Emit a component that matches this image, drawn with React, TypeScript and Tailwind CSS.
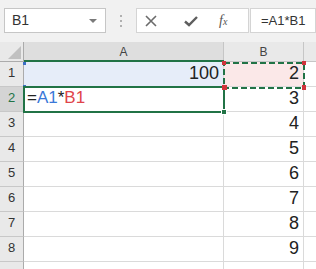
import React from "react";

const rows = [1, 2, 3, 4, 5, 6, 7, 8, 9];
const bValues: Record<number, string> = { 1: "2", 2: "3", 3: "4", 4: "5", 5: "6", 6: "7", 7: "8", 8: "9" };

export default function App() {
  return (
    <div className="w-[316px] h-[269px] overflow-hidden bg-white" style={{ fontFamily: '"Liberation Sans", Arial, sans-serif' }}>
      {/* formula bar */}
      <div className="h-[42px] bg-[#f1f1f1] flex items-start pt-[8px]">
        <div className="ml-[4px] w-[102px] h-[25px] bg-white border border-[#c6c6c6] flex items-center justify-between pl-[7px] pr-[8px]">
          <span className="text-[14px] text-[#333]">B1</span>
          <span className="w-0 h-0 border-l-[4px] border-r-[4px] border-t-[4px] border-l-transparent border-r-transparent border-t-[#7a7a7a]" />
        </div>
        <div className="w-[30px] h-[25px] flex flex-col items-center justify-center gap-[3px]">
          <span className="w-[2px] h-[2px] bg-[#b0b0b0]" />
          <span className="w-[2px] h-[2px] bg-[#b0b0b0]" />
          <span className="w-[2px] h-[2px] bg-[#b0b0b0]" />
        </div>
        <div className="w-[113px] h-[25px] bg-white border border-[#d4d4d4] flex items-center">
          <svg width="14" height="14" viewBox="0 0 14 14" className="ml-[7px]">
            <path d="M2 2 L12 12 M12 2 L2 12" stroke="#6b6b6b" strokeWidth="1.6" />
          </svg>
          <svg width="16" height="14" viewBox="0 0 16 14" className="ml-[25px]">
            <path d="M2 7.5 L6 11 L14 3" stroke="#5e5e5e" strokeWidth="2.4" fill="none" />
          </svg>
          <span className="ml-[20px] text-[14px] italic text-[#555]" style={{ fontFamily: '"Liberation Serif", serif' }}>
            f<span className="text-[10px]">x</span>
          </span>
        </div>
        <div className="ml-[1px] flex-1 h-[25px] bg-white border border-[#d4d4d4] flex items-center pl-[10px]">
          <span className="text-[13px] text-[#333]">=A1*B1</span>
        </div>
      </div>

      {/* sheet */}
      <div className="relative grid grid-cols-[24px_200px_80px_1fr] grid-rows-[20px_repeat(9,25px)]">
        {/* header row */}
        <div className="bg-[#e9e9e9] border-r border-b border-[#ababab] relative">
          <svg width="24" height="20" viewBox="0 0 24 20" className="absolute left-0 top-0">
            <path d="M8 17 L21 17 L21 4 Z" fill="#c0c0c0" />
          </svg>
        </div>
        <div className="bg-[#dedede] border-r border-[#c6c6c6] flex items-center justify-center text-[12px] text-[#444] pb-[1px]">A</div>
        <div className="bg-[#e9e9e9] border-r border-b border-[#c6c6c6] flex items-center justify-center text-[12px] text-[#444]">B</div>
        <div className="bg-[#e9e9e9] border-b border-[#c6c6c6]" />

        {rows.map((r) => (
          <React.Fragment key={r}>
            <div
              className={`border-r border-b border-[#ababab] border-b-[#c8c8c8] flex items-end justify-center pb-[4px] text-[13px] ${
                r === 2 ? "bg-[#d4d4d4] text-[#217346]" : "bg-[#e9e9e9] text-[#333]"
              }`}
            >
              {r < 9 ? r : ""}
            </div>
            <div
              className={`border-r border-b border-[#dadada] flex items-end justify-end pr-[4px] pb-[2px] ${
                r === 1 ? "bg-[#e6edf9]" : ""
              }`}
            >
              {r === 1 && <span className="text-[18px] leading-[22px] text-[#222]">100</span>}
              {r === 2 && (
                <span className="mr-auto pl-[3px] text-[17px] leading-[22px] text-[#222]">
                  =<span className="text-[#3b78d8]">A1</span>*<span className="text-[#e0444a]">B1</span>
                </span>
              )}
            </div>
            <div
              className={`border-r border-b border-[#dadada] flex items-end justify-end pr-[4px] pb-[2px] ${
                r === 1 ? "bg-[#fbe8e8]" : ""
              }`}
            >
              {bValues[r] && <span className="text-[18px] leading-[22px] text-[#222]">{bValues[r]}</span>}
            </div>
            <div className="border-b border-[#dadada]" />
          </React.Fragment>
        ))}

        {/* column A header highlight line */}
        <span className="absolute left-[24px] top-[18px] w-[200px] h-[2px] bg-[#217346]" />

        {/* A1 reference corners */}
        <span className="absolute left-[23px] top-[20px] w-[3px] h-[3px] bg-[#3b6fc6]" />
        <span className="absolute left-[23px] top-[43px] w-[3px] h-[3px] bg-[#3b6fc6]" />

        {/* active cell A2 */}
        <span className="absolute left-[23px] top-[44px] w-[202px] h-[27px] border-2 border-[#217346]" />
        <span className="absolute left-[221px] top-[67px] w-[6px] h-[6px] bg-[#217346] border border-white" />

        {/* B1 copy marquee */}
        <svg width="84" height="29" viewBox="0 0 84 29" className="absolute left-[222px] top-[19px]">
          <rect x="2" y="2" width="80" height="25" fill="none" stroke="#217346" strokeWidth="2" strokeDasharray="6 3" />
          <rect x="0" y="0" width="4" height="4" fill="#d0343c" />
          <rect x="80" y="0" width="4" height="4" fill="#d0343c" />
          <rect x="0" y="24" width="5" height="5" fill="#d0343c" />
          <rect x="80" y="24" width="5" height="5" fill="#d0343c" />
        </svg>
      </div>
    </div>
  );
}
